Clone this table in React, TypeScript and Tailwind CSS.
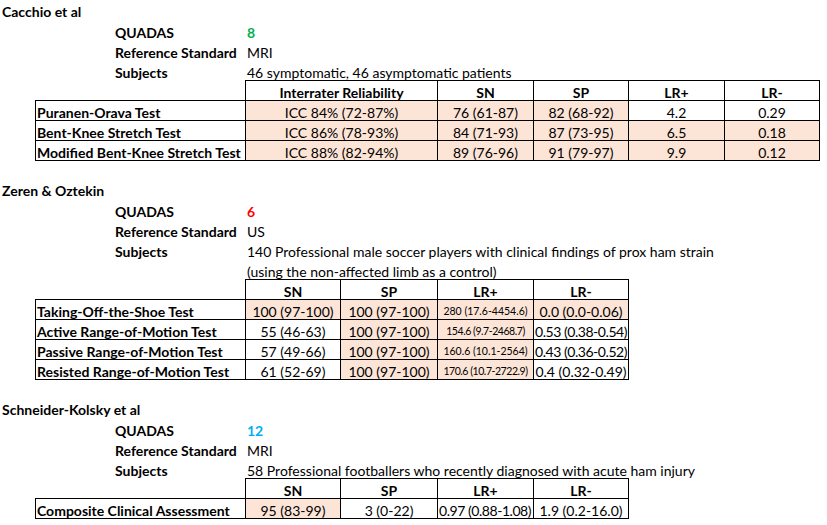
import React from "react"

type Cell = { text: string; fill?: boolean; small?: boolean; left?: boolean; tight?: boolean }
type Row = { label: string; cells: Cell[] }

const font = { fontFamily: "Lato, 'Open Sans', sans-serif" }

function Meta({ label, value, valueClass }: { label: string; value: string; valueClass?: string }) {
  return (
    <div className="flex h-[20px] items-center pt-[5px]">
      <div className="w-[245px] pl-[115px] font-bold">{label}</div>
      <div className={"pl-[2px] whitespace-nowrap " + (valueClass ?? "")}>{value}</div>
    </div>
  )
}

function DataTable({ widths, headers, rows }: { widths: number[]; headers: string[]; rows: Row[] }) {
  return (
    <div className="pl-[35px]">
      <div className="flex h-[20px]">
        <div style={{ width: widths[0] }} />
        {headers.map((h, i) => (
          <div
            key={h}
            style={{ width: widths[i + 1] }}
            className={
              "flex items-center justify-center border-l border-t border-black pt-[4px] font-bold " +
              (i === headers.length - 1 ? "border-r" : "")
            }
          >
            {h}
          </div>
        ))}
      </div>
      {rows.map((r, ri) => (
        <div key={r.label} className="flex h-[20px]">
          <div
            style={{ width: widths[0] }}
            className={
              "relative z-10 flex items-center border-l border-t border-black pl-[1px] pt-[4px] font-bold whitespace-nowrap " +
              (ri === rows.length - 1 ? "h-[21px] border-b" : "")
            }
          >
            {r.label}
          </div>
          {r.cells.map((c, ci) => (
            <div
              key={ci}
              style={{ width: widths[ci + 1] }}
              className={
                "flex items-center overflow-hidden border-l border-t border-black pt-[4px] whitespace-nowrap " +
                (c.left ? "justify-start pl-[1px] " : "justify-center ") +
                (c.fill ? "bg-[#fce4d6] " : "bg-white ") +
                (c.small ? "text-[10.5px] " : "") +
                (c.tight ? "tracking-[-0.45px] " : "") +
                (ci === r.cells.length - 1 ? "border-r " : "") +
                (ri === rows.length - 1 ? "h-[21px] border-b" : "")
              }
            >
              {c.text}
            </div>
          ))}
        </div>
      ))}
    </div>
  )
}

export default function App() {
  const w1 = [210, 192, 96, 95, 96, 96]
  const w2 = [210, 95, 97, 96, 96]

  return (
    <div className="w-[827px] h-[525px] overflow-hidden bg-white text-[14px] text-black leading-none" style={font}>
      {/* Cacchio */}
      <div className="flex h-[20px] items-center pl-[2px] pt-[4px] font-bold">Cacchio et al</div>
      <Meta label="QUADAS" value="8" valueClass="font-bold text-[#00b050]" />
      <Meta label="Reference Standard" value="MRI" />
      <Meta label="Subjects" value="46 symptomatic, 46 asymptomatic patients" />
      <DataTable
        widths={w1}
        headers={["Interrater Reliability", "SN", "SP", "LR+", "LR-"]}
        rows={[
          {
            label: "Puranen-Orava Test",
            cells: [
              { text: "ICC 84% (72-87%)", fill: true },
              { text: "76 (61-87)", fill: true },
              { text: "82 (68-92)", fill: true },
              { text: "4.2" },
              { text: "0.29" },
            ],
          },
          {
            label: "Bent-Knee Stretch Test",
            cells: [
              { text: "ICC 86% (78-93%)", fill: true },
              { text: "84 (71-93)", fill: true },
              { text: "87 (73-95)", fill: true },
              { text: "6.5", fill: true },
              { text: "0.18", fill: true },
            ],
          },
          {
            label: "Modified Bent-Knee Stretch Test",
            cells: [
              { text: "ICC 88% (82-94%)", fill: true },
              { text: "89 (76-96)", fill: true },
              { text: "91 (79-97)", fill: true },
              { text: "9.9", fill: true },
              { text: "0.12", fill: true },
            ],
          },
        ]}
      />
      <div className="h-[19px]" />

      {/* Zeren */}
      <div className="flex h-[20px] items-center pl-[2px] pt-[4px] font-bold">Zeren &amp; Oztekin</div>
      <Meta label="QUADAS" value="6" valueClass="font-bold text-[#ff0000]" />
      <Meta label="Reference Standard" value="US" />
      <Meta label="Subjects" value="140 Professional male soccer players with clinical findings of prox ham strain" />
      <Meta label="" value="(using the non-affected limb as a control)" />
      <DataTable
        widths={w2}
        headers={["SN", "SP", "LR+", "LR-"]}
        rows={[
          {
            label: "Taking-Off-the-Shoe Test",
            cells: [
              { text: "100 (97-100)", fill: true },
              { text: "100 (97-100)", fill: true },
              { text: "280 (17.6-4454.6)", fill: true, small: true },
              { text: "0.0 (0.0-0.06)", fill: true },
            ],
          },
          {
            label: "Active Range-of-Motion Test",
            cells: [
              { text: "55 (46-63)" },
              { text: "100 (97-100)", fill: true },
              { text: "154.6 (9.7-2468.7)", fill: true, small: true, tight: true },
              { text: "0.53 (0.38-0.54)", tight: true },
            ],
          },
          {
            label: "Passive Range-of-Motion Test",
            cells: [
              { text: "57 (49-66)" },
              { text: "100 (97-100)", fill: true },
              { text: "160.6 (10.1-2564)", fill: true, small: true },
              { text: "0.43 (0.36-0.52)", tight: true },
            ],
          },
          {
            label: "Resisted Range-of-Motion Test",
            cells: [
              { text: "61 (52-69)" },
              { text: "100 (97-100)", fill: true },
              { text: "170.6 (10.7-2722.9)", fill: true, small: true, tight: true },
              { text: "0.4 (0.32-0.49)" },
            ],
          },
        ]}
      />
      <div className="h-[19px]" />

      {/* Schneider-Kolsky */}
      <div className="flex h-[20px] items-center pl-[2px] pt-[4px] font-bold">Schneider-Kolsky et al</div>
      <Meta label="QUADAS" value="12" valueClass="font-bold text-[#00b0f0]" />
      <Meta label="Reference Standard" value="MRI" />
      <Meta label="Subjects" value="58 Professional footballers who recently diagnosed with acute ham injury" />
      <DataTable
        widths={w2}
        headers={["SN", "SP", "LR+", "LR-"]}
        rows={[
          {
            label: "Composite Clinical Assessment",
            cells: [
              { text: "95 (83-99)", fill: true },
              { text: "3 (0-22)" },
              { text: "0.97 (0.88-1.08)", left: true, tight: true },
              { text: "1.9 (0.2-16.0)" },
            ],
          },
        ]}
      />
    </div>
  )
}
